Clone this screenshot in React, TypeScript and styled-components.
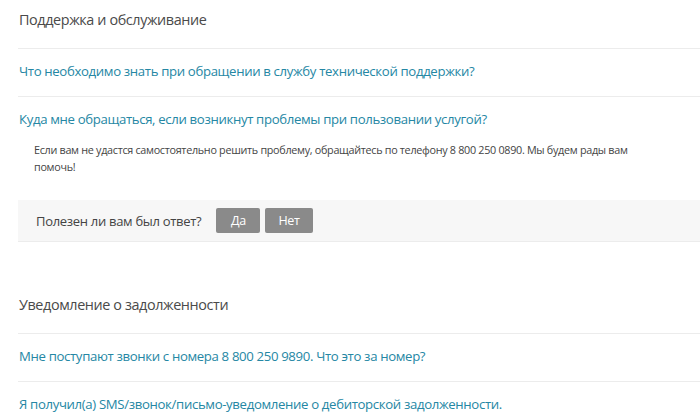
import styled, { createGlobalStyle } from 'styled-components';

const GlobalStyle = createGlobalStyle`
  html, body {
    margin: 0;
    padding: 0;
    background: #ffffff;
  }
  body {
    font-family: 'Open Sans', 'Noto Sans', sans-serif;
    color: #444444;
  }
`;

type Question = { text: string; answer?: string };
type Section = { title: string; questions: Question[] };

const sections: Section[] = [
  {
    title: 'Поддержка и обслуживание',
    questions: [
      { text: 'Что необходимо знать при обращении в службу технической поддержки?' },
      {
        text: 'Куда мне обращаться, если возникнут проблемы при пользовании услугой?',
        answer:
          'Если вам не удастся самостоятельно решить проблему, обращайтесь по телефону 8 800 250 0890. Мы будем рады вам помочь!',
      },
    ],
  },
  {
    title: 'Уведомление о задолженности',
    questions: [
      { text: 'Мне поступают звонки с номера 8 800 250 9890. Что это за номер?' },
      { text: 'Я получил(а) SMS/звонок/письмо-уведомление о дебиторской задолженности.' },
    ],
  },
];

export default function App() {
  return (
    <>
      <GlobalStyle />
      <Page>
        {sections.map((section, i) => (
          <Group key={section.title} $first={i === 0}>
            <Title>{section.title}</Title>
            {section.questions.map((q) => (
              <Item key={q.text}>
                <QuestionLink href="#">{q.text}</QuestionLink>
                {q.answer && (
                  <>
                    <Answer>{q.answer}</Answer>
                    <Feedback>
                      <FeedbackLabel>Полезен ли вам был ответ?</FeedbackLabel>
                      <VoteButton>Да</VoteButton>
                      <VoteButton>Нет</VoteButton>
                    </Feedback>
                  </>
                )}
              </Item>
            ))}
          </Group>
        ))}
      </Page>
    </>
  );
}

const Page = styled.div`
  padding-left: 18px;
  width: 682px;
`;

const Group = styled.section<{ $first: boolean }>`
  padding-top: ${(p) => (p.$first ? '6px' : '49px')};
`;

const Title = styled.h2`
  margin: 0;
  padding: 0 0 0 1px;
  height: 42px;
  font-size: 14.4px;
  font-weight: 400;
  letter-spacing: -0.4px;
  line-height: 28px;
  color: #4a4a4a;
  border-bottom: 1px solid #ececec;
`;

const Item = styled.div`
  border-bottom: 1px solid #ececec;
`;

const QuestionLink = styled.a`
  display: block;
  padding: 11px 0 14px 1px;
  font-size: 13.2px;
  letter-spacing: -0.35px;
  line-height: 22px;
  color: #2587a4;
  text-decoration: none;
`;

const Answer = styled.p`
  margin: -3px 0 0;
  padding: 0 40px 25px 16px;
  font-size: 10.8px;
  letter-spacing: -0.3px;
  line-height: 17px;
  color: #444444;
`;

const Feedback = styled.div`
  display: flex;
  align-items: center;
  gap: 5px;
  height: 41px;
  padding-left: 18px;
  background: #f7f7f7;
`;

const FeedbackLabel = styled.span`
  font-size: 13px;
  letter-spacing: -0.3px;
  color: #444444;
  margin-right: 10px;
`;

const VoteButton = styled.button`
  min-width: 44px;
  height: 25px;
  padding: 0 13px;
  border: none;
  border-radius: 2px;
  background: #8a8a8a;
  color: #ffffff;
  font-family: inherit;
  font-size: 12.5px;
  letter-spacing: -0.3px;
  cursor: pointer;
`;
